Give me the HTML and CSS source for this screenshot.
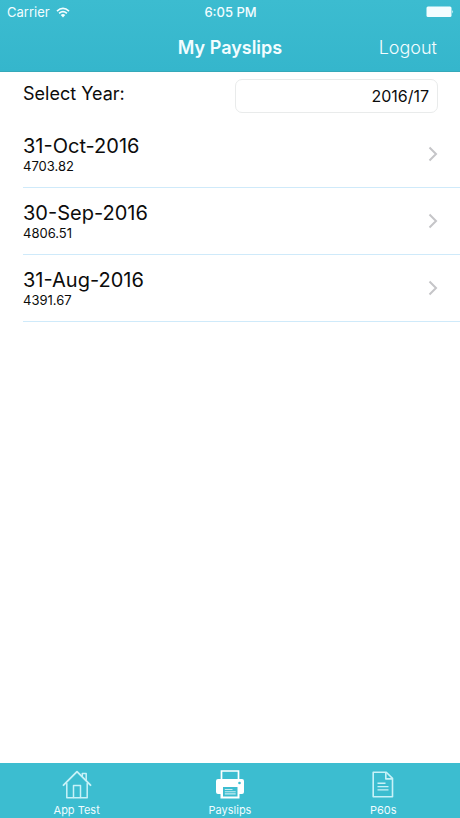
FILE: index.html
```html
<!DOCTYPE html>
<html lang="en">
<head>
<meta charset="utf-8">
<meta name="viewport" content="width=device-width, initial-scale=1">
<title>My Payslips</title>
<link rel="stylesheet" href="styles.css">
</head>
<body>
<header class="header">
  <div class="status">
    <div class="carrier">
      <span>Carrier</span>
      <svg class="wifi" viewBox="0 0 14 11" aria-hidden="true">
        <path d="M1 4.1Q7-1.3 13 4.1M3.1 6.3Q7 2.9 10.9 6.3" fill="none" stroke="currentColor" stroke-width="1.7"/>
        <path d="M4.7 8Q7 6.2 9.3 8L7 10.4Z" fill="currentColor"/>
      </svg>
    </div>
    <span class="time">6:05 PM</span>
    <svg class="battery" viewBox="0 0 28 12" aria-hidden="true">
      <rect x="0.5" y="0.5" width="25" height="10.5" rx="1.5" fill="currentColor"/>
      <path d="M26.3 4Q28 5.8 26.3 7.6Z" fill="currentColor"/>
    </svg>
  </div>
  <div class="navbar">
    <h1 class="title">My Payslips</h1>
    <button class="logout" type="button">Logout</button>
  </div>
</header>
<main class="content">
  <div class="year">
    <label for="year">Select Year:</label>
    <select id="year" class="year-select">
      <option selected>2016/17</option>
    </select>
  </div>
  <ul class="payslips">
    <li><a class="payslip" href="#oct">
      <span class="details"><span class="date">31-Oct-2016</span><span class="amount">4703.82</span></span>
      <svg class="chevron" viewBox="0 0 10 16" aria-hidden="true"><path d="M1.5 1.5L8 8L1.5 14.5"/></svg>
    </a></li>
    <li><a class="payslip" href="#sep">
      <span class="details"><span class="date">30-Sep-2016</span><span class="amount">4806.51</span></span>
      <svg class="chevron" viewBox="0 0 10 16" aria-hidden="true"><path d="M1.5 1.5L8 8L1.5 14.5"/></svg>
    </a></li>
    <li><a class="payslip" href="#aug">
      <span class="details"><span class="date">31-Aug-2016</span><span class="amount">4391.67</span></span>
      <svg class="chevron" viewBox="0 0 10 16" aria-hidden="true"><path d="M1.5 1.5L8 8L1.5 14.5"/></svg>
    </a></li>
  </ul>
</main>
<nav class="tabs">
  <a class="tab" href="#home">
    <svg class="icon" viewBox="0 0 30 30" aria-hidden="true">
      <g fill="none" stroke="currentColor" stroke-width="1.5" stroke-linejoin="round" stroke-linecap="round">
        <path d="M4.8 13.5V27.8H25.2V13.5"/>
        <path d="M1.5 15.2L15 1.7L28.5 15.2" stroke-width="1.9"/>
        <path d="M11.5 27.5V15.5H18.5V27.5"/>
        <path d="M20.3 6V3.6H24.2V10"/>
      </g>
    </svg>
    <span>App Test</span>
  </a>
  <a class="tab active" href="#payslips">
    <svg class="icon" viewBox="0 0 30 30" aria-hidden="true">
      <path d="M6.5 10V1H23.5V10" fill="none" stroke="currentColor" stroke-width="1.7"/>
      <path d="M3 9H27Q29 9 29 11V22Q29 24 27 24H24.5V28.5H5.5V24H3Q1 24 1 22V11Q1 9 3 9Z" fill="currentColor"/>
      <rect class="cutout" x="8" y="17" width="14.5" height="9.5"/>
      <path d="M9.8 19.5H17.5M9.8 21.7H20.7M9.8 23.9H20.7" stroke="currentColor" stroke-opacity="0.7" stroke-width="1.1"/>
      <circle class="cutout" cx="24.5" cy="13" r="1.3"/>
    </svg>
    <span>Payslips</span>
  </a>
  <a class="tab" href="#p60s">
    <svg class="icon" viewBox="0 0 30 30" aria-hidden="true">
      <g fill="none" stroke="currentColor" stroke-width="1.6" stroke-linejoin="round">
        <path d="M5.2 2.2H18.3L24.5 8.4V26.8H5.2Z"/>
        <path d="M17.8 2.5V8.9H24.3"/>
        <path d="M9.5 13.3H17.5M9.5 16.6H20.5M9.5 19.9H20.5" stroke-width="1.4"/>
      </g>
    </svg>
    <span>P60s</span>
  </a>
</nav>
</body>
</html>
```

FILE: styles.css
```css
* { box-sizing: border-box; }

body {
  margin: 0;
  min-height: 100vh;
  display: flex;
  flex-direction: column;
  background: #fff;
  color: #0c0c0c;
  font-family: Inter, "Liberation Sans", sans-serif;
}

.header {
  background: linear-gradient(#3cbcd0, #35b6cc);
  border-bottom: 1px solid #35a9b9;
  color: #f3fdff;
}

.status {
  display: grid;
  grid-template-columns: 1fr auto 1fr;
  align-items: center;
  height: 24px;
  padding: 0 6px 0 7px;
  font-size: 13px;
}

.carrier {
  display: flex;
  align-items: center;
  gap: 6px;
}

.wifi { width: 14px; height: 11px; }
.time { font-weight: 500; }
.battery { width: 28px; height: 12px; justify-self: end; }

.navbar {
  display: grid;
  grid-template-columns: 1fr auto 1fr;
  align-items: center;
  height: 47px;
  padding: 0 23px;
}

.title {
  grid-column: 2;
  margin: 0;
  font-size: 18px;
  font-weight: 600;
}

.logout {
  justify-self: end;
  padding: 0;
  border: 0;
  background: none;
  color: inherit;
  font: 300 18px/24px Inter, "Liberation Sans", sans-serif;
}

.content { flex: 1; }

.year {
  display: flex;
  align-items: flex-start;
  justify-content: space-between;
  padding: 7px 22px 8px 23px;
  font-size: 18px;
  line-height: 30px;
}

.year-select {
  appearance: none;
  width: 49%;
  height: 34px;
  padding: 0 8px;
  border: 1px solid #e9ebeb;
  border-radius: 7px;
  background: #fff;
  color: inherit;
  font: 16px Inter, "Liberation Sans", sans-serif;
  text-align-last: right;
}

.payslips {
  margin: 0;
  padding: 0 0 0 23px;
  list-style: none;
}

.payslip {
  display: flex;
  align-items: center;
  justify-content: space-between;
  height: 67px;
  padding-right: 22px;
  border-bottom: 1px solid #cfeafa;
  color: inherit;
  text-decoration: none;
}

.details { display: flex; flex-direction: column; }
.date { font-size: 20px; line-height: 24px; }
.amount { font-size: 13px; line-height: 16px; }

.chevron {
  width: 10px;
  height: 16px;
  fill: none;
  stroke: #c5c5c8;
  stroke-width: 2;
}

.tabs {
  display: grid;
  grid-template-columns: repeat(3, 1fr);
  height: 55px;
  background: #3cbdd0;
}

.tab {
  display: flex;
  flex-direction: column;
  align-items: center;
  padding-top: 7px;
  color: #c8f2f8;
  font-size: 11px;
  line-height: 14px;
  text-decoration: none;
}

.tab span { margin-top: 3px; color: #effcff; }
.tab.active { color: #fff; }
.icon { width: 30px; height: 30px; }
.cutout { fill: #3cbdd0; }
```
